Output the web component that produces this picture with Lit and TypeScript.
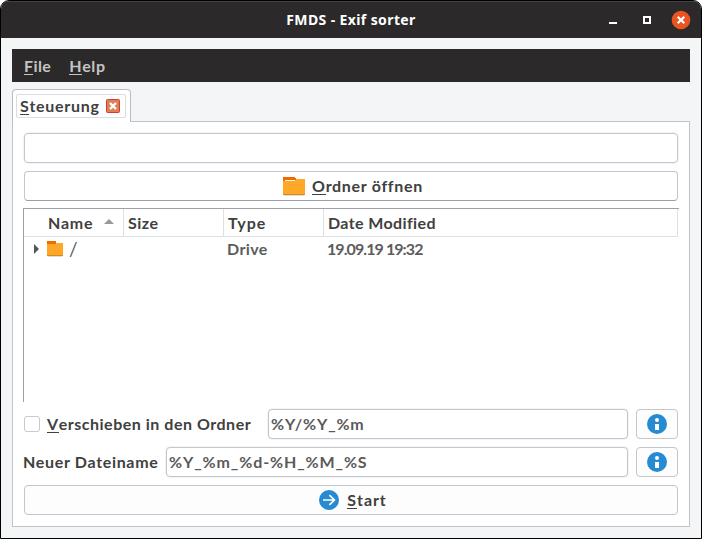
import { LitElement, html, css, svg } from "lit";
import { customElement } from "lit/decorators.js";

const folder = (w: number, h: number) => html`
  <svg class="icon" width=${w} height=${h} viewBox="0 0 22 19" preserveAspectRatio="none" shape-rendering="crispEdges">
    <path fill="#ef6c00" d="M0 0h12l1 2v3H0z" />
    <path fill="#fff3e0" d="M2 3h11v1H2z" />
    <path fill="#ffa726" d="M0 4h11l2-2h9v16H0z" />
    <path fill="#d98a1c" d="M0 17h22v1H0z" />
    <path fill="#dedede" d="M1 18h20v1H1z" />
  </svg>`;

const disc = (mark: unknown) => html`
  <svg class="icon" width="20" height="20" viewBox="0 0 20 20">
    <circle cx="10" cy="10" r="10" fill="#268bd2" />
    ${mark}
  </svg>`;

const info = () => disc(svg`<circle cx="10" cy="6" r="2" fill="#fff" /><path d="M8 10h4v6H8z" fill="#fff" />`);
const arrow = () =>
  disc(svg`<path d="M4 10h11.3M10.4 5.2l5 4.8-5 4.8" fill="none" stroke="#fff" stroke-width="1.7" />`);

@customElement("app-root")
export class AppRoot extends LitElement {
  static styles = css`
    :host {
      display: block;
      width: 702px;
      height: 539px;
      background: #fff;
      font: 700 16px/20px Lato, "Noto Sans", sans-serif;
      color: #404040;
    }
    * { box-sizing: border-box; }
    .window {
      height: 539px;
      border: 1px solid #000;
      border-radius: 9px 9px 0 0;
      background: #f4f5f7;
      overflow: hidden;
    }
    .icon { display: block; flex: none; }
    .t { white-space: pre; }
    .key { box-shadow: 0 -1px 0 currentColor inset; display: inline-block; height: 19px; }
    .title {
      display: grid;
      grid-template-columns: 1fr auto;
      height: 37px;
      background: #2c292a;
      border-top: 1px solid #454243;
      color: #fff;
    }
    .title-text {
      grid-area: 1 / 1 / 2 / 3;
      text-align: center;
      font: 700 14px/36px "Noto Sans", sans-serif;
      letter-spacing: 0.39px;
    }
    .controls { grid-area: 1 / 2; display: flex; padding: 8px 10px 0 0; }
    .body { padding: 11px 11px 0; }
    .menu {
      display: flex;
      gap: 18px;
      height: 33px;
      padding: 7px 12px;
      background: #2c292a;
      color: #c4c4c4;
    }
    .m1 { letter-spacing: 0.4px; }
    .m2 { letter-spacing: 0.6px; }
    .tabname { letter-spacing: 0.7px; }
    .opentext { letter-spacing: 0.7px; }
    .n1 { letter-spacing: 0.8px; }
    .n2 { letter-spacing: 0.5px; }
    .n3 { letter-spacing: 1px; }
    .n4 { letter-spacing: 0.38px; }
    .r3 { letter-spacing: 0.4px; }
    .r4 { letter-spacing: -0.92px; }
    .l1 { letter-spacing: 0.52px; }
    .l2 { letter-spacing: 0.68px; }
    .f1 { letter-spacing: 0.8px; }
    .f2 { letter-spacing: 0.88px; }
    .st { letter-spacing: 0.9px; }
    .root { font-size: 19px; font-weight: 400; }
    .tab {
      width: 119px;
      height: 33px;
      margin-top: 7px;
      margin-bottom: -1px;
      padding: 4px 4px 0 3px;
      border: 1px solid #b9bbc0;
      border-bottom: 0;
      border-radius: 4px 4px 0 0;
      background: #fff;
      position: relative;
    }
    .focus {
      display: flex;
      align-items: center;
      justify-content: space-between;
      height: 24px;
      padding: 0 5px 0 3px;
      border: 1px solid #dcdcdc;
      border-radius: 2px;
    }
    .panel {
      display: flex;
      flex-direction: column;
      height: 406px;
      padding: 11px;
      border: 1px solid #c0c4ca;
      background: #fff;
    }
    .field, .button {
      height: 30px;
      border: 1px solid #c2c6cd;
      border-radius: 4px;
      background: #fff;
    }
    .field { box-shadow: 0 0 0 1px #f4f4f6; padding: 4px 2px; color: #5a5a5a; flex: 1; }
    .full { flex: none; }
    .button { display: flex; align-items: center; justify-content: center; background: #fdfdfe; }
    .open { margin-top: 8px; padding-left: 4px; gap: 7px; background: #fff; border-bottom-color: #979fad; }
    .start { margin-top: 8px; padding-left: 4px; gap: 8px; }
    .info { width: 42px; margin-left: 8px; flex: none; }
    .tree {
      width: 656px;
      height: 194px;
      margin: 7px 0 0 -1px;
      border-top: 1px solid #a0a1a8;
      border-left: 1px solid #a0a1a8;
    }
    .head, .row { display: grid; grid-template-columns: 100px 100px 100px 354px; }
    .head { width: 654px; height: 28px; border-bottom: 1px solid #dfe0e2; }
    .cell {
      display: flex;
      align-items: center;
      padding-left: 4px;
      padding-top: 1px;
      border-right: 1px solid #dfe0e2;
    }
    .name { padding-left: 24px; gap: 11px; }
    .sort { margin-top: -4px; }
    .row { height: 24px; color: #5c5c5c; }
    .item { display: flex; align-items: center; padding-left: 3px; }
    .first { padding-left: 10px; }
    .first .icon + .icon { margin: 0 6px 0 8px; }
    .line { display: flex; height: 30px; margin: 8px 0 0 -1px; }
    .line.move { margin-top: 7px; }
    .label { padding-top: 5px; }
    .check {
      width: 16px;
      height: 16px;
      margin: 7px 7px 0 1px;
      border: 1px solid #c9c9c9;
      border-radius: 3px;
      flex: none;
    }
    .w-move { width: 221px; flex: none; }
    .w-file { width: 143px; flex: none; }
  `;

  render() {
    return html`
      <div class="window">
        <div class="title">
          <div class="title-text"><span class="t">FMDS - Exif sorter</span></div>
          <div class="controls">
            <svg class="icon" width="82" height="20" viewBox="0 0 82 20">
              <path d="M0 12h8v2H0z" fill="#fff" />
              <path d="M35 7h6v6h-6z" fill="none" stroke="#fff" stroke-width="2" />
              <circle cx="72" cy="10" r="9.3" fill="#e95420" />
              <path d="M68.7 6.7l6.6 6.6m0-6.6l-6.6 6.6" stroke="#fff" stroke-width="2.2" />
            </svg>
          </div>
        </div>
        <div class="body">
          <div class="menu">
            <span class="t m1"><span class="key">F</span>ile</span>
            <span class="t m2"><span class="key">H</span>elp</span>
          </div>
          <div class="tab">
            <div class="focus">
              <span class="t tabname"><span class="key">S</span>teuerung</span>
              <svg class="icon" width="14" height="14" viewBox="0 0 14 14">
                <rect x=".5" y=".5" width="13" height="13" rx="1" fill="#dc8058" stroke="#d83a2b" />
                <path d="M4 4l6 6m0-6l-6 6" stroke="#fff" stroke-width="2.4" />
              </svg>
            </div>
          </div>
          <div class="panel">
            <div class="field full"></div>
            <div class="button open">
              ${folder(22, 19)}<span class="t opentext"><span class="key">O</span>rdner öffnen</span>
            </div>
            <div class="tree">
              <div class="head">
                <div class="cell name">
                  <span class="t n1">Name</span>
                  <svg class="icon sort" width="10" height="5" viewBox="0 0 10 5"><path d="M0 5l5-5 5 5z" fill="#999" /></svg>
                </div>
                <div class="cell"><span class="t n2">Size</span></div>
                <div class="cell"><span class="t n3">Type</span></div>
                <div class="cell"><span class="t n4">Date Modified</span></div>
              </div>
              <div class="row">
                <div class="item first">
                  <svg class="icon" width="5" height="10" viewBox="0 0 5 10"><path d="M0 0l5 5-5 5z" fill="#555" /></svg>
                  ${folder(16, 16)}<span class="t root">/</span>
                </div>
                <div class="item"></div>
                <div class="item"><span class="t r3">Drive</span></div>
                <div class="item"><span class="t r4">19.09.19 19:32</span></div>
              </div>
            </div>
            <div class="line move">
              <span class="check"></span>
              <div class="label w-move"><span class="t l1"><span class="key">V</span>erschieben in den Ordner</span></div>
              <div class="field"><span class="t f1">%Y/%Y_%m</span></div>
              <div class="button info">${info()}</div>
            </div>
            <div class="line">
              <div class="label w-file"><span class="t l2">Neuer Dateiname</span></div>
              <div class="field"><span class="t f2">%Y_%m_%d-%H_%M_%S</span></div>
              <div class="button info">${info()}</div>
            </div>
            <div class="button start">
              ${arrow()}<span class="t st"><span class="key">S</span>tart</span>
            </div>
          </div>
        </div>
      </div>
    `;
  }
}
